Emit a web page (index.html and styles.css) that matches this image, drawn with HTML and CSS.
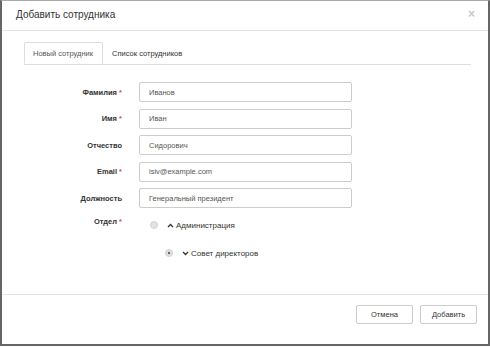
FILE: index.html
```html
<!DOCTYPE html>
<html lang="ru">

<head>
    <meta charset="UTF-8">
    <title>Добавить сотрудника</title>
    <link rel="stylesheet" href="styles.css">
</head>

<body>
    <div class="modal">
        <div class="modal-header">
            <h4 class="modal-title">Добавить сотрудника</h4>
            <button class="close" type="button">&times;</button>
        </div>

        <div class="modal-body">
            <ul class="nav-tabs">
                <li class="active"><a href="#">Новый сотрудник</a></li>
                <li><a href="#">Список сотрудников</a></li>
            </ul>

            <form class="form-horizontal">
                <div class="form-group">
                    <label class="control-label">Фамилия <span class="req">*</span></label>
                    <input class="form-control" type="text" value="Иванов">
                </div>
                <div class="form-group">
                    <label class="control-label">Имя <span class="req">*</span></label>
                    <input class="form-control" type="text" value="Иван">
                </div>
                <div class="form-group">
                    <label class="control-label">Отчество</label>
                    <input class="form-control" type="text" value="Сидорович">
                </div>
                <div class="form-group">
                    <label class="control-label">Email <span class="req">*</span></label>
                    <input class="form-control" type="text" value="isiv@example.com">
                </div>
                <div class="form-group">
                    <label class="control-label">Должность</label>
                    <input class="form-control" type="text" value="Генеральный президент">
                </div>
                <div class="form-group tree-group">
                    <label class="control-label">Отдел <span class="req">*</span></label>
                    <div class="tree">
                        <div class="tree-node">
                            <span class="radio"></span>
                            <svg class="chevron" width="7" height="5" viewBox="0 0 7 5"><polyline points="1,4 3.5,1.5 6,4" /></svg>
                            <span>Администрация</span>
                        </div>
                        <div class="tree-node child">
                            <span class="radio checked"></span>
                            <svg class="chevron" width="7" height="5" viewBox="0 0 7 5"><polyline points="1,1 3.5,3.5 6,1" /></svg>
                            <span>Совет директоров</span>
                        </div>
                    </div>
                </div>
            </form>
        </div>

        <div class="modal-footer">
            <button class="btn" type="button">Отмена</button>
            <button class="btn" type="button">Добавить</button>
        </div>
    </div>
</body>

</html>
```

FILE: styles.css
```css
body {
    margin: 0;
    font-family: "Liberation Sans", Arial, sans-serif;
    color: #333;
    background-color: #fff;
}

.modal {
    box-sizing: border-box;
    width: 490px;
    height: 346px;
    border: 2px solid #666;
    border-top: 1px solid #aaa;
    background-color: #fff;
    display: flex;
    flex-direction: column;
}

.modal-header {
    height: 30px;
    box-sizing: border-box;
    border-bottom: 1px solid #e5e5e5;
    display: flex;
    align-items: center;
    justify-content: space-between;
    padding: 0 13px 3px 14px;
}

.modal-title {
    margin: 0;
    font-size: 10px;
    font-weight: normal;
    color: #333;
}

.close {
    border: none;
    background: none;
    padding: 0;
    font-size: 12px;
    font-weight: bold;
    color: #c8c8c8;
    font-family: "Liberation Sans", Arial, sans-serif;
}

.modal-body {
    flex: 1;
    padding: 11px 17px 0 22px;
}

.nav-tabs {
    list-style: none;
    margin: 0;
    padding: 0;
    display: flex;
    border-bottom: 1px solid #ddd;
    height: 22px;
}

.nav-tabs li {
    margin-bottom: -1px;
}

.nav-tabs a {
    display: block;
    height: 22px;
    line-height: 21px;
    padding: 0 9px 0 8px;
    font-size: 7.5px;
    color: #333;
    text-decoration: none;
    border: 1px solid transparent;
    border-radius: 2px 2px 0 0;
    box-sizing: border-box;
}

.nav-tabs li.active a {
    border-color: #ddd;
    border-bottom-color: #fff;
    background-color: #fff;
    color: #555;
}

.form-horizontal {
    margin-top: 17px;
}

.form-group {
    display: flex;
    align-items: center;
    margin-bottom: 6.5px;
}

.control-label {
    width: 98px;
    padding-right: 17px;
    text-align: right;
    font-size: 7.5px;
    font-weight: bold;
    color: #333;
}

.req {
    color: #e04848;
}

.form-control {
    box-sizing: border-box;
    width: 213px;
    height: 20px;
    padding: 0 9px;
    border: 1px solid #ccc;
    border-radius: 2px;
    font-family: "Liberation Sans", Arial, sans-serif;
    font-size: 7.5px;
    color: #555;
}

.tree-group {
    align-items: flex-start;
    margin-top: 9px;
}

.tree-group .control-label {
    line-height: 10px;
}

.tree {
    font-size: 8px;
    color: #333;
}

.tree-node {
    display: flex;
    align-items: center;
    height: 10px;
    padding-left: 11px;
    margin-top: 3px;
    margin-bottom: 18px;
}

.tree-node.child {
    padding-left: 26px;
}

.radio {
    width: 6px;
    height: 6px;
    border-radius: 50%;
    background-color: #e2e2e2;
    border: 0.5px solid #d4d4d4;
    margin-right: 9px;
}

.radio.checked {
    background-color: #e0e0e0;
    background-image: radial-gradient(circle, #666 0, #666 1.2px, #e0e0e0 1.6px);
}

.chevron {
    fill: none;
    stroke: #333;
    stroke-width: 1.3;
    margin-right: 2px;
}

.modal-footer {
    height: 50px;
    border-top: 1px solid #e5e5e5;
    display: flex;
    justify-content: flex-end;
    align-items: flex-start;
    padding: 10px 11px 0 0;
    gap: 7px;
    box-sizing: border-box;
}

.btn {
    width: 57px;
    height: 19px;
    border: 1px solid #ccc;
    border-radius: 2px;
    background-color: #fff;
    font-family: "Liberation Sans", Arial, sans-serif;
    font-size: 7.5px;
    color: #333;
    padding: 0;
}
```
